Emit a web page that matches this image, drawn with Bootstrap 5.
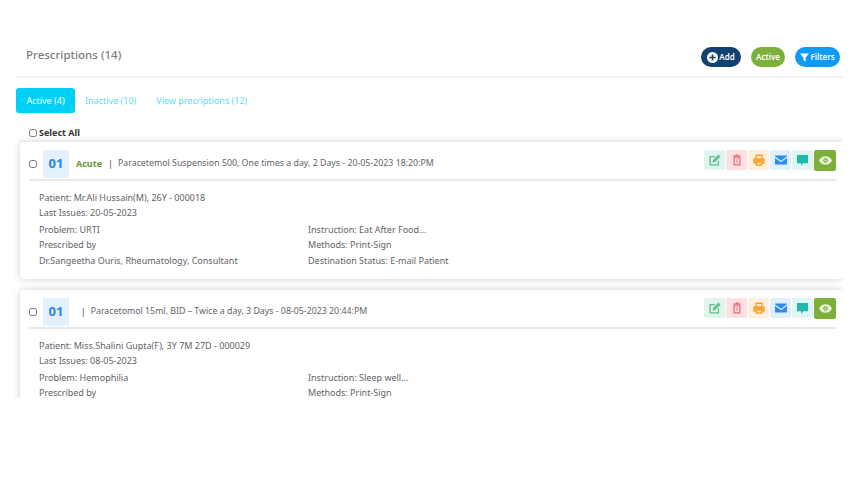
<!DOCTYPE html>
<html lang="en">
<head>
    <meta charset="UTF-8">
    <meta name="viewport" content="width=device-width, initial-scale=1.0">
    <title>Prescriptions</title>
    <link href="https://cdn.jsdelivr.net/npm/bootstrap@5.3.0/dist/css/bootstrap.min.css" rel="stylesheet">
    <style>
        body { background: #fff; font-family: "Noto Sans", sans-serif; font-size: 9px; color: #5f6368; }
        .page-wrap { width: 843px; height: 398px; overflow: hidden; padding: 0 0 0 16px; }
        .page-head { height: 78px; padding: 44px 3px 0 10px; border-bottom: 2px solid #f3f3f3; }
        .page-title { font-size: 11.5px; font-weight: 500; color: #7b7b7b; line-height: 22px; margin: 0; }
        .pill { height: 20px; border-radius: 10px; font-size: 8px; font-weight: 600; color: #fff; line-height: 20px; padding: 0; display: flex; align-items: center; justify-content: center; gap: 1px; }
        .pill-add { width: 40px; background: #12406f; }
        .pill-active { width: 34px; background: #7cb03b; }
        .pill-filter { width: 45px; background: #0d9bf5; }
        .pill-row { gap: 10px; margin-top: 3px; }
        .tab-row { margin-top: 10px; gap: 20px; }
        .tab-item { height: 25px; line-height: 25px; font-size: 9px; padding: 0; color: #5fdcf8; }
        .tab-on { width: 59px; background: #00d0f5; color: #fff; border-radius: 3px; text-align: center; margin-right: -10px; }
        .select-row { margin: 13px 0 0 13px; height: 14px; font-size: 9px; font-weight: 700; color: #333; gap: 2px; }
        .select-row input, .rx-head input { width: 8px; height: 8px; margin: 0; }
        .rx-card { margin: 2px 0 11px 4px; height: 137px; border-radius: 3px; box-shadow: 0 0 7px rgba(0,0,0,.2); padding: 0 7px 0 9px; background: #fff; }
        .rx-head { height: 39px; border-bottom: 2px solid #e9e9e9; padding-top: 8px; }
        .rx-head input { margin-right: 6px; }
        .rx-num { width: 26px; height: 28px; background: #e3f1ff; color: #2b86e6; font-size: 13px; font-weight: 700; line-height: 27px; text-align: center; margin-right: 7px; }
        .rx-type { color: #5f9a2e; font-weight: 700; margin-right: 6px; }
        .rx-sep { color: #444; margin-right: 5px; }
        .rx-drug { font-size: 8.8px; }
        .rx-tools { gap: 1px; }
        .tool-btn { width: 21px; height: 20px; border-radius: 2px; display: flex; align-items: center; justify-content: center; }
        .tool-edit { background: #e2f5ec; }
        .tool-del { background: #fde0e3; }
        .tool-print { background: #fff0dd; }
        .tool-mail { background: #e0efff; }
        .tool-chat { background: #e0f6f5; }
        .tool-view { background: #7cb03b; width: 22px; height: 21px; }
        .rx-body { padding: 9px 0 0 10px; line-height: 15.4px; }
        .rx-block { margin-bottom: 1px; }
        .rx-left { width: 269px; }
    </style>
</head>
<body>
    <div class="page-wrap">
        <div class="page-head d-flex justify-content-between align-items-start">
            <h1 class="page-title">Prescriptions (14)</h1>
            <div class="d-flex pill-row">
                <div class="pill pill-add">
                    <svg width="11" height="11" viewBox="0 0 16 16"><circle cx="8" cy="8" r="8" fill="#fff"/><path d="M8 3.500v9M3.500 8h9" stroke="#12406f" stroke-width="2.400"/></svg>Add
                </div>
                <div class="pill pill-active">Active</div>
                <div class="pill pill-filter">
                    <svg width="9" height="9" viewBox="0 0 16 16"><path d="M0 1h16l-6 7v7l-4-2V8z" fill="#fff"/></svg>Filters
                </div>
            </div>
        </div>

        <div class="d-flex tab-row">
            <div class="tab-item tab-on">Active (4)</div>
            <div class="tab-item">Inactive (10)</div>
            <div class="tab-item">View precriptions (12)</div>
        </div>

        <div class="d-flex align-items-center select-row">
            <input type="checkbox"><span>Select All</span>
        </div>

        <div class="rx-card">
            <div class="rx-head d-flex align-items-start">
                <div class="d-flex align-items-center flex-grow-1">
                    <input type="checkbox">
                    <div class="rx-num">01</div>
                    <span class="rx-type">Acute</span>
                    <span class="rx-sep">|</span>
                    <span class="rx-drug">Paracetemol Suspension 500, One times a day, 2 Days - 20-05-2023 18:20:PM</span>
                </div>
                <div class="d-flex rx-tools">
                    <div class="tool-btn tool-edit"><svg width="12" height="12" viewBox="0 0 16 16"><path d="M12.500 9v5.500h-11v-11H8" fill="none" stroke="#5fbf8f" stroke-width="1.800"/><path d="M5.500 8l7-7.500 3 3-7.500 7-3.500 1z" fill="#5fbf8f"/></svg></div>
                    <div class="tool-btn tool-del"><svg width="10" height="12" viewBox="0 0 12 16"><path d="M1 2h10v1.500H1zM4 .5h4V2H4z" fill="#f2646f"/><path d="M2.200 5h7.600v9.500H2.200z" fill="none" stroke="#f2646f" stroke-width="1.600"/><path d="M6 7v5" stroke="#f2646f" stroke-width="1.200"/></svg></div>
                    <div class="tool-btn tool-print"><svg width="12" height="12" viewBox="0 0 16 16"><path d="M4 6V1.500h8V6M4 12H1.500V6.500h13V12H12" fill="#fff0dd" stroke="#ff9f2e" stroke-width="2"/><path d="M1 7h14v3H1z" fill="#ff9f2e"/><path d="M4.500 10.500h7v4h-7z" fill="none" stroke="#ff9f2e" stroke-width="2"/></svg></div>
                    <div class="tool-btn tool-mail"><svg width="12" height="10" viewBox="0 0 16 12"><path d="M0 0h16v1L8 7 0 1zM0 3l8 6 8-6v9H0z" fill="#2b8cf0"/></svg></div>
                    <div class="tool-btn tool-chat"><svg width="11" height="11" viewBox="0 0 16 16"><path d="M0 0h16v12H9l-3 4v-4H0z" fill="#1fb8ac"/></svg></div>
                    <div class="tool-btn tool-view"><svg width="13" height="9" viewBox="0 0 16 11"><path d="M0 5.500c3-7 13-7 16 0-3 7-13 7-16 0z" fill="#e8f2da"/><circle cx="8" cy="5.500" r="2.800" fill="#7cb03b"/><circle cx="8" cy="5.500" r="1.200" fill="#e8f2da"/></svg></div>
                </div>
            </div>
            <div class="rx-body">
                <div class="rx-block">Patient: Mr.Ali Hussain(M), 26Y - 000018<br>Last Issues: 20-05-2023</div>
                <div class="d-flex">
                    <div class="rx-left">Problem: URTI<br>Prescribed by<br>Dr.Sangeetha Ouris, Rheumatology, Consultant</div>
                    <div>Instruction: Eat After Food...<br>Methods: Print-Sign<br>Destination Status: E-mail Patient</div>
                </div>
            </div>
        </div>

        <div class="rx-card">
            <div class="rx-head d-flex align-items-start">
                <div class="d-flex align-items-center flex-grow-1">
                    <input type="checkbox">
                    <div class="rx-num">01</div>
                    <span class="rx-sep">&nbsp;&nbsp;|</span>
                    <span class="rx-drug">Paracetomol 15ml, BID – Twice a day, 3 Days - 08-05-2023 20:44:PM</span>
                </div>
                <div class="d-flex rx-tools">
                    <div class="tool-btn tool-edit"><svg width="12" height="12" viewBox="0 0 16 16"><path d="M12.500 9v5.500h-11v-11H8" fill="none" stroke="#5fbf8f" stroke-width="1.800"/><path d="M5.500 8l7-7.500 3 3-7.500 7-3.500 1z" fill="#5fbf8f"/></svg></div>
                    <div class="tool-btn tool-del"><svg width="10" height="12" viewBox="0 0 12 16"><path d="M1 2h10v1.500H1zM4 .5h4V2H4z" fill="#f2646f"/><path d="M2.200 5h7.600v9.500H2.200z" fill="none" stroke="#f2646f" stroke-width="1.600"/><path d="M6 7v5" stroke="#f2646f" stroke-width="1.200"/></svg></div>
                    <div class="tool-btn tool-print"><svg width="12" height="12" viewBox="0 0 16 16"><path d="M4 6V1.500h8V6M4 12H1.500V6.500h13V12H12" fill="#fff0dd" stroke="#ff9f2e" stroke-width="2"/><path d="M1 7h14v3H1z" fill="#ff9f2e"/><path d="M4.500 10.500h7v4h-7z" fill="none" stroke="#ff9f2e" stroke-width="2"/></svg></div>
                    <div class="tool-btn tool-mail"><svg width="12" height="10" viewBox="0 0 16 12"><path d="M0 0h16v1L8 7 0 1zM0 3l8 6 8-6v9H0z" fill="#2b8cf0"/></svg></div>
                    <div class="tool-btn tool-chat"><svg width="11" height="11" viewBox="0 0 16 16"><path d="M0 0h16v12H9l-3 4v-4H0z" fill="#1fb8ac"/></svg></div>
                    <div class="tool-btn tool-view"><svg width="13" height="9" viewBox="0 0 16 11"><path d="M0 5.500c3-7 13-7 16 0-3 7-13 7-16 0z" fill="#e8f2da"/><circle cx="8" cy="5.500" r="2.800" fill="#7cb03b"/><circle cx="8" cy="5.500" r="1.200" fill="#e8f2da"/></svg></div>
                </div>
            </div>
            <div class="rx-body">
                <div class="rx-block">Patient: Miss.Shalini Gupta(F), 3Y 7M 27D - 000029<br>Last Issues: 08-05-2023</div>
                <div class="d-flex">
                    <div class="rx-left">Problem: Hemophilia<br>Prescribed by</div>
                    <div>Instruction: Sleep well...<br>Methods: Print-Sign</div>
                </div>
            </div>
        </div>
    </div>

    <script src="https://cdn.jsdelivr.net/npm/bootstrap@5.3.0/dist/js/bootstrap.bundle.min.js"></script>
</body>
</html>
